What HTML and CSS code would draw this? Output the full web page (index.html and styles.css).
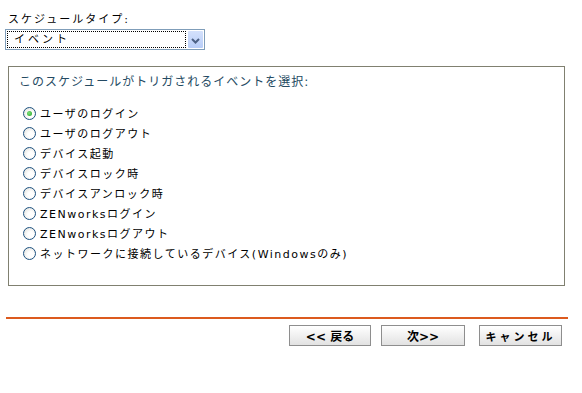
FILE: index.html
```html
<!DOCTYPE html>
<html lang="ja">
<head>
    <meta charset="UTF-8">
    <title>スケジュール</title>
    <link rel="stylesheet" href="styles.css">
</head>
<body>
    <div class="page">
        <div class="field-label">スケジュールタイプ:</div>
        <div class="select">
            <span class="select-value">イベント</span>
            <span class="select-arrow">
                <svg width="15" height="19" viewBox="0 0 15 19">
                    <path d="M4 8 L7.5 11.5 L11 8" fill="none" stroke="#4d6185" stroke-width="2"/>
                </svg>
            </span>
        </div>

        <div class="events">
            <div class="events-title">このスケジュールがトリガされるイベントを選択:</div>
            <ul class="event-list">
                <li><label><input type="radio" name="ev" checked>ユーザのログイン</label></li>
                <li><label><input type="radio" name="ev">ユーザのログアウト</label></li>
                <li><label><input type="radio" name="ev">デバイス起動</label></li>
                <li><label><input type="radio" name="ev">デバイスロック時</label></li>
                <li><label><input type="radio" name="ev">デバイスアンロック時</label></li>
                <li><label><input type="radio" name="ev">ZENworksログイン</label></li>
                <li><label><input type="radio" name="ev">ZENworksログアウト</label></li>
                <li><label><input type="radio" name="ev">ネットワークに接続しているデバイス(Windowsのみ)</label></li>
            </ul>
        </div>

        <div class="wizard-line"></div>

        <div class="buttons">
            <button type="button" class="btn btn-back">&lt;&lt; 戻る</button>
            <button type="button" class="btn btn-next">次&gt;&gt;</button>
            <button type="button" class="btn btn-cancel">キャンセル</button>
        </div>
    </div>
</body>
</html>
```

FILE: styles.css
```css
body {
    margin: 0;
    font-family: "DejaVu Sans", "Noto Sans CJK JP", sans-serif;
    font-size: 11px;
    color: #000;
    background-color: #fff;
}
.page {
    padding: 13px 0 0 5px;
    width: 565px;
}
.field-label {
    margin-left: 3px;
    line-height: 14px;
    letter-spacing: 2px;
}
.select {
    margin-top: 2px;
    width: 198px;
    height: 19px;
    border: 1px solid #7f9db9;
    display: flex;
    align-items: stretch;
    background-color: #fff;
}
.select-value {
    flex: 1;
    margin: 1px 2px 1px 1px;
    border: 1px dotted #000;
    padding-left: 6px;
    line-height: 15px;
    letter-spacing: 3px;
}
.select-arrow {
    width: 15px;
    margin: 1px 1px 1px 0;
    background: linear-gradient(#d4e1fc, #b8cdf8);
    border-radius: 1px;
    display: flex;
}
.events {
    margin: 16px 0 0 3px;
    width: 555px;
    height: 218px;
    border: 1px solid #808070;
    box-sizing: content-box;
}
.events-title {
    padding: 8px 0 0 10px;
    line-height: 14px;
    font-size: 12px;
    letter-spacing: 1px;
    color: #244a62;
}
.event-list {
    list-style: none;
    margin: 14px 0 0 0;
    padding: 0 0 0 14px;
}
.event-list li {
    height: 20px;
    display: flex;
    align-items: center;
}
.event-list label {
    display: flex;
    align-items: center;
    letter-spacing: 1.5px;
}
.event-list input {
    appearance: none;
    width: 13px;
    height: 13px;
    margin: 0 4px 0 0;
    border: 1px solid #1c5180;
    border-radius: 50%;
    background: radial-gradient(circle at 60% 60%, #ffffff 30%, #dcdcd6 100%);
    box-sizing: border-box;
    position: relative;
}
.event-list input:checked::after {
    content: "";
    position: absolute;
    left: 3px;
    top: 3px;
    width: 5px;
    height: 5px;
    border-radius: 50%;
    background: radial-gradient(circle at 40% 40%, #7ee27e, #21a121);
}
.wizard-line {
    margin: 31px 0 0 1px;
    width: 562px;
    height: 2px;
    background-color: #dc5a1e;
}
.buttons {
    margin-top: 6px;
    display: flex;
    justify-content: flex-end;
    gap: 10px;
    padding-right: 8px;
}
.btn {
    height: 21px;
    border: 1px solid #8e8e8e;
    background: linear-gradient(#ffffff, #e2e2e2);
    font-family: "DejaVu Sans", "Noto Sans CJK JP", sans-serif;
    font-size: 12px;
    font-weight: bold;
    padding: 0;
    cursor: pointer;
}
.btn-back {
    width: 82px;
}
.btn-next {
    width: 84px;
}
.btn-cancel {
    width: 83px;
    margin-left: 4px;
    letter-spacing: 3px;
    font-size: 11px;
}
```
